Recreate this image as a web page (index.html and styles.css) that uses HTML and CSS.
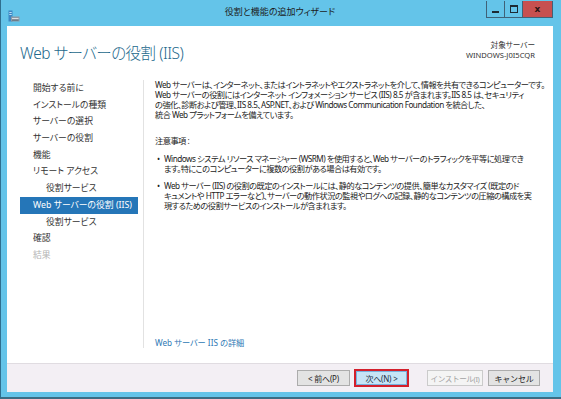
FILE: index.html
```html
<!DOCTYPE html>
<html lang="ja">
  <head>
    <meta charset="UTF-8" />
    <meta name="viewport" content="width=device-width, initial-scale=1.0" />
    <title>役割と機能の追加ウィザード</title>
    <link rel="stylesheet" href="styles.css">
  </head>
  <body>
    <div class="window">
      <div class="titlebar">
        <div class="titlebar-icon">
          <svg width="12" height="12" viewBox="0 0 12 12">
            <rect x="0.5" y="0.5" width="4" height="11" fill="#3d87c4" />
            <rect x="1.3" y="2" width="2.4" height="1" fill="#bfe0f5" />
            <rect x="1.3" y="4" width="2.4" height="1" fill="#bfe0f5" />
            <rect x="3" y="6.5" width="8.5" height="5" fill="#8c9aa6" />
            <rect x="4" y="8" width="6.5" height="1" fill="#d7dee4" />
            <rect x="4" y="9.8" width="6.5" height="0.8" fill="#5c6a76" />
          </svg>
        </div>
        <div class="titlebar-title">役割と機能の追加ウィザード</div>
        <div class="titlebar-controls">
          <div class="ctl ctl-min"><span class="ctl-min-bar"></span></div>
          <div class="ctl ctl-max"><span class="ctl-max-box"></span></div>
          <div class="ctl ctl-close">x</div>
        </div>
      </div>

      <div class="dialog">
        <div class="dialog-header">
          <h1 class="dialog-title">Web サーバーの役割 (IIS)</h1>
          <div class="target-server">
            <div>対象サーバー</div>
            <div>WINDOWS-J0I5CQR</div>
          </div>
        </div>

        <div class="dialog-body">
          <div class="nav">
            <div class="nav-item">開始する前に</div>
            <div class="nav-item">インストールの種類</div>
            <div class="nav-item">サーバーの選択</div>
            <div class="nav-item">サーバーの役割</div>
            <div class="nav-item">機能</div>
            <div class="nav-item">リモート アクセス</div>
            <div class="nav-item sub">役割サービス</div>
            <div class="nav-item active">Web サーバーの役割 (IIS)</div>
            <div class="nav-item sub">役割サービス</div>
            <div class="nav-item">確認</div>
            <div class="nav-item disabled">結果</div>
          </div>

          <div class="main">
            <p class="para">
              Web サーバーは、インターネット、またはイントラネットやエクストラネットを介して、情報を共有できるコンピューターです。<br>
              Web サーバーの役割にはインターネット インフォメーション サービス (IIS) 8.5 が含まれます。IIS 8.5 は、セキュリティ<br>
              の強化、診断および管理、IIS 8.5、ASP.NET、および Windows Communication Foundation を統合した、<br>
              統合 Web プラットフォームを備えています。
            </p>
            <p class="notes-title">注意事項 :</p>
            <ul class="notes">
              <li>Windows システム リソース マネージャー (WSRM) を使用すると、Web サーバーのトラフィックを平等に処理でき<br>
                ます。特にこのコンピューターに複数の役割がある場合は有効です。</li>
              <li>Web サーバー (IIS) の役割の既定のインストールには、静的なコンテンツの提供、簡単なカスタマイズ (既定のド<br>
                キュメントや HTTP エラーなど)、サーバーの動作状況の監視やログへの記録、静的なコンテンツの圧縮の構成を実<br>
                現するための役割サービスのインストールが含まれます。</li>
            </ul>
            <a class="more-link" href="#">Web サーバー IIS の詳細</a>
          </div>
        </div>

        <div class="dialog-footer">
          <button class="btn btn-prev">&lt; 前へ(P)</button>
          <button class="btn btn-next">次へ(N) &gt;</button>
          <button class="btn btn-install" disabled>インストール(I)</button>
          <button class="btn btn-cancel">キャンセル</button>
        </div>
      </div>
    </div>
  </body>
</html>
```

FILE: styles.css
```css
body {
  margin: 0;
  font-family: "Noto Sans", "Noto Sans CJK JP", sans-serif;
  font-feature-settings: "palt";
  color: #222;
}

.window {
  width: 561px;
  height: 399px;
  box-sizing: border-box;
  display: flex;
  flex-direction: column;
  padding: 0 8px 5px 6px;
  background: #64c4e9;
  border-left: 1px solid #2f6f8f;
  border-bottom: 2px solid #3b6d84;
}

/* title bar */
.titlebar {
  height: 26px;
  display: grid;
  grid-template-columns: 1fr auto 1fr;
}
.titlebar-icon {
  padding: 5px 0 0 1px;
}
.titlebar-title {
  font-size: 9px;
  line-height: 26px;
  color: #1c1c1c;
  margin-top: -1px;
}
.titlebar-controls {
  justify-self: end;
  display: flex;
  height: 17px;
  margin-top: 1px;
  border: 1px solid #3f6278;
  border-top: none;
  box-sizing: border-box;
}
.ctl {
  width: 17px;
  display: flex;
  align-items: center;
  justify-content: center;
  border-right: 1px solid #3f6278;
}
.ctl-min-bar {
  width: 7px;
  height: 2px;
  background: #1d2a33;
  margin-top: 5px;
}
.ctl-max-box {
  width: 6px;
  height: 5px;
  border: 1px solid #1d2a33;
  border-top-width: 2px;
}
.ctl-close {
  width: 29px;
  border-right: none;
  background: #c75050;
  color: #2b1414;
  font-family: "DejaVu Sans", sans-serif;
  font-size: 9px;
  font-weight: bold;
  line-height: 1;
}

/* dialog */
.dialog {
  flex: 1;
  display: flex;
  flex-direction: column;
  background: #fff;
}
.dialog-header {
  height: 54px;
  box-sizing: border-box;
  display: flex;
  justify-content: space-between;
  padding: 15px 18px 0 13px;
}
.dialog-title {
  margin: 1px 0 0;
  font-size: 15.5px;
  font-weight: 300;
  line-height: 22px;
  letter-spacing: -0.5px;
  color: #22688c;
}
.target-server {
  font-size: 7.6px;
  line-height: 9.5px;
  text-align: right;
  color: #333;
}

.dialog-body {
  flex: 1;
  display: flex;
  min-width: 0;
}
.nav {
  flex-shrink: 0;
  width: 118px;
  padding: 0 5px 0 13px;
  margin-bottom: 15px;
  border-right: 1px solid #e2e2e2;
}
.nav-item {
  height: 16.7px;
  line-height: 16.7px;
  padding-left: 13px;
  font-size: 8.8px;
  color: #333;
  white-space: nowrap;
}
.nav-item.sub {
  padding-left: 26px;
}
.nav-item.active {
  background: #2576b8;
  color: #fff;
}
.nav-item.disabled {
  color: #b4b4b4;
}

.main {
  flex: 1;
  min-width: 0;
  display: flex;
  flex-direction: column;
  padding: 0 12px 14px 11px;
  font-size: 8.2px;
  line-height: 10px;
  letter-spacing: -0.5px;
  white-space: nowrap;
}
.para {
  margin: 0;
}
.notes-title {
  margin: 16px 0 0;
}
.notes {
  margin: 8px 0 0;
  padding: 0 0 0 9px;
  list-style: none;
}
.notes li {
  margin-bottom: 7px;
}
.notes li::before {
  content: "•";
  display: inline-block;
  width: 7px;
  margin-left: -7px;
  letter-spacing: 0;
}
.more-link {
  margin-top: auto;
  line-height: 12px;
  letter-spacing: 0;
  color: #2e78b4;
  text-decoration: none;
}

/* footer */
.dialog-footer {
  height: 29px;
  box-sizing: border-box;
  display: flex;
  justify-content: flex-end;
  align-items: center;
  padding-right: 13px;
  background: #f3eff4;
  border-top: 1px solid #e0dce1;
}
.btn {
  height: 16px;
  box-sizing: border-box;
  margin: 0 0 0 5px;
  padding: 0;
  font-family: inherit;
  font-size: 8px;
  letter-spacing: -0.2px;
  white-space: nowrap;
  color: #222;
  background: #e3e3e3;
  border: 1px solid #acacac;
  border-radius: 0;
}
.btn-prev {
  width: 53px;
}
.btn-next {
  width: 55px;
  height: 18px;
  margin-left: 4px;
  background: #c6e4f6;
  border: 2px solid #d3202c;
  box-shadow: inset 0 0 0 1px #76b2e0;
  color: #1c2f44;
}
.btn-install {
  width: 56px;
  margin-left: 18px;
  font-size: 7.6px;
  letter-spacing: -0.4px;
  background: #f4f4f4;
  border-color: #cbcbcb;
  color: #a3a3a3;
}
.btn-cancel {
  width: 52px;
}
```
